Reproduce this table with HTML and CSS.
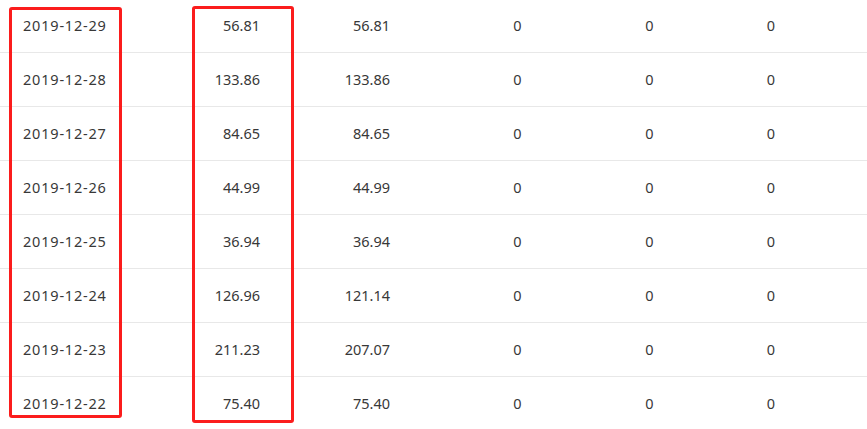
FILE: index.html
```html
<!DOCTYPE html>
<html lang="zh-CN">
<head>
<meta charset="utf-8">
<title>Daily figures</title>
<link rel="stylesheet" href="styles.css">
</head>
<body>
<div class="page">
  <div class="table">
    <div class="row"><span class="c date">2019-12-29</span><span class="c num a">56.81</span><span class="c num b">56.81</span><span class="c zero">0</span><span class="c zero">0</span><span class="c zero">0</span></div>
    <div class="row"><span class="c date">2019-12-28</span><span class="c num a">133.86</span><span class="c num b">133.86</span><span class="c zero">0</span><span class="c zero">0</span><span class="c zero">0</span></div>
    <div class="row"><span class="c date">2019-12-27</span><span class="c num a">84.65</span><span class="c num b">84.65</span><span class="c zero">0</span><span class="c zero">0</span><span class="c zero">0</span></div>
    <div class="row"><span class="c date">2019-12-26</span><span class="c num a">44.99</span><span class="c num b">44.99</span><span class="c zero">0</span><span class="c zero">0</span><span class="c zero">0</span></div>
    <div class="row"><span class="c date">2019-12-25</span><span class="c num a">36.94</span><span class="c num b">36.94</span><span class="c zero">0</span><span class="c zero">0</span><span class="c zero">0</span></div>
    <div class="row"><span class="c date">2019-12-24</span><span class="c num a">126.96</span><span class="c num b">121.14</span><span class="c zero">0</span><span class="c zero">0</span><span class="c zero">0</span></div>
    <div class="row"><span class="c date">2019-12-23</span><span class="c num a">211.23</span><span class="c num b">207.07</span><span class="c zero">0</span><span class="c zero">0</span><span class="c zero">0</span></div>
    <div class="row"><span class="c date">2019-12-22</span><span class="c num a">75.40</span><span class="c num b">75.40</span><span class="c zero">0</span><span class="c zero">0</span><span class="c zero">0</span></div>
  </div>
  <div class="mark mark-date"></div>
  <div class="mark mark-amount"></div>
</div>
</body>
</html>
```
FILE: styles.css
```css
html, body {
  margin: 0;
  padding: 0;
  background: #fff;
}
.page {
  position: relative;
  width: 867px;
  height: 429px;
  overflow: hidden;
  font-family: "Noto Sans", "Open Sans", "Noto Sans CJK SC", sans-serif;
  font-size: 14.5px;
  color: #383838;
}
.table {
  margin-top: -1px;
}
.row {
  display: grid;
  grid-template-columns: 140px 130px 181px 133px 131px 112px 1fr;
  align-items: center;
  height: 54px;
  padding-bottom: 2px;
  box-sizing: border-box;
  border-bottom: 1px solid #e8e8e8;
}
.c {
  display: block;
  white-space: nowrap;
}
.date {
  padding-left: 23px;
  letter-spacing: 0.8px;
}
.num {
  text-align: right;
}
.num.a {
  padding-right: 10px;
}
.num.b {
  padding-right: 61px;
}
.zero {
  text-align: center;
}
.mark {
  position: absolute;
  box-sizing: border-box;
  border: 3px solid #fb1c1c;
  border-radius: 3px;
}
.mark-date {
  left: 9px;
  top: 7px;
  width: 113px;
  height: 411px;
}
.mark-amount {
  left: 192px;
  top: 6px;
  width: 102px;
  height: 417px;
}
```
